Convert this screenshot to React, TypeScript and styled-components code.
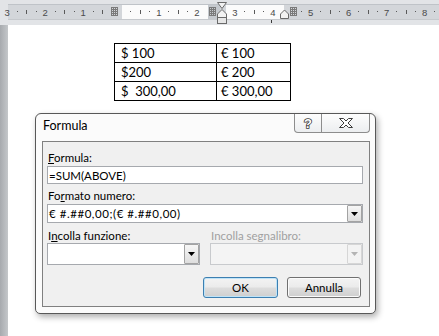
import React from "react";
import styled, { createGlobalStyle } from "styled-components";

const Global = createGlobalStyle`
  html, body { margin: 0; padding: 0; background: #ffffff; }
  body { width: 439px; height: 336px; overflow: hidden; }
`;

const UI_FONT = `"Lato", "Liberation Sans", sans-serif`;

const Screen = styled.div`
  position: relative;
  width: 439px;
  height: 336px;
  overflow: hidden;
  background: #ffffff;
  display: flex;
  flex-direction: column;
`;

/* ---------- Ruler ---------- */
const RulerBand = styled.div`
  position: relative;
  flex: none;
  height: 25px;
  box-sizing: border-box;
  padding: 4px 0 0 8px;
  background: #e2e4e7;
`;

const RulerStrip = styled.div`
  display: flex;
  height: 16px;
  box-sizing: border-box;
  border-top: 1px solid #bfc3c8;
  border-bottom: 1px solid #c6c9cd;
`;

const RulerSeg = styled.div<{ $w?: number; $tone: "gray" | "white" | "dark" }>`
  ${(p) => (p.$w ? `width: ${p.$w}px; flex: none;` : "flex: 1;")}
  background: ${(p) =>
    p.$tone === "white" ? "#fbfbfb" : p.$tone === "dark" ? "#c5c9ce" : "#d3d6da"};
`;

const RulerOverlay = styled.svg`
  position: absolute;
  left: 0;
  top: 0;
  width: 439px;
  height: 25px;
  pointer-events: none;
`;

/* ---------- Document ---------- */
const DocArea = styled.div`
  flex: 1;
  display: flex;
`;

const SideStrip = styled.div`
  width: 8px;
  flex: none;
  background: linear-gradient(to right, #a7aaae, #c4c7ca);
`;

const Page = styled.div`
  flex: 1;
  background: #ffffff;
  padding: 18px 0 0 106px;
`;

const CellGrid = styled.div`
  display: grid;
  grid-template-columns: 102px 74px;
  width: max-content;
  border-left: 1px solid #000;
  border-top: 1px solid #000;
`;

const Cell = styled.div<{ $pad: number }>`
  height: 19px;
  box-sizing: border-box;
  border-right: 1px solid #000;
  border-bottom: 1px solid #000;
  padding-left: ${(p) => p.$pad}px;
  font: 13px "Lato", "Liberation Sans", sans-serif;
  line-height: 18px;
  color: #000;
  white-space: pre;
`;

/* ---------- Dialog ---------- */
const Dialog = styled.div`
  position: absolute;
  left: 35px;
  top: 113px;
  width: 341px;
  height: 201px;
  box-sizing: border-box;
  border: 1px solid #585858;
  border-radius: 6px 6px 5px 5px;
  background: #fbfbfb;
  box-shadow: 2px 3px 6px rgba(0, 0, 0, 0.32);
  display: flex;
  flex-direction: column;
  padding: 0 5px 6px 6px;
  font-family: ${UI_FONT};
`;

const TitleBar = styled.div`
  height: 27px;
  flex: none;
  display: flex;
  align-items: flex-start;
`;

const TitleText = styled.div`
  margin-left: 1px;
  padding-top: 4px;
  font-size: 12.5px;
  line-height: 15px;
  color: #000;
`;

const CaptionGroup = styled.div`
  margin-left: auto;
  display: flex;
`;

const CaptionButton = styled.div<{ $w: number; $side: "left" | "right" }>`
  width: ${(p) => p.$w}px;
  height: 19px;
  box-sizing: border-box;
  border: 1px solid #8d8d8d;
  border-top: none;
  ${(p) => (p.$side === "right" ? "border-left: none;" : "")}
  border-radius: ${(p) => (p.$side === "left" ? "0 0 0 4px" : "0 0 4px 0")};
  background: linear-gradient(#fdfdfd, #eceef0);
  display: flex;
  align-items: center;
  justify-content: center;
`;

const Client = styled.div`
  flex: 1;
  border: 1px solid #808080;
  background: #f0f0f0;
  display: flex;
  flex-direction: column;
  padding: 9px 6px 8px 4px;
`;

const Label = styled.div<{ $top?: number; $disabled?: boolean }>`
  margin-top: ${(p) => p.$top ?? 0}px;
  padding-left: 1px;
  font-size: 11.5px;
  line-height: 14px;
  height: 14px;
  color: ${(p) => (p.$disabled ? "#a0a0a0" : "#000")};
  white-space: pre;
`;

const Key = styled.span`
  text-decoration: underline;
  text-underline-offset: 1px;
`;

const TextBox = styled.div<{ $h: number; $top?: number; $disabled?: boolean }>`
  margin-top: ${(p) => p.$top ?? 0}px;
  height: ${(p) => p.$h}px;
  box-sizing: border-box;
  border: 1px solid ${(p) => (p.$disabled ? "#c8cacd" : "#a6a9ae")};
  background: ${(p) => (p.$disabled ? "#f4f4f4" : "#ffffff")};
  display: flex;
  align-items: stretch;
  font-size: 11.5px;
  color: #000;
`;

const BoxText = styled.div<{ $spacing?: number }>`
  flex: 1;
  padding-left: 1px;
  display: flex;
  align-items: center;
  white-space: pre;
  letter-spacing: ${(p) => p.$spacing ?? 0}px;
`;

const DropButton = styled.div<{ $disabled?: boolean }>`
  width: 15px;
  flex: none;
  box-sizing: border-box;
  border: 1px solid ${(p) => (p.$disabled ? "#d6d6d6" : "#a3a3a3")};
  border-radius: 1px;
  background: ${(p) =>
    p.$disabled ? "#f3f3f3" : "linear-gradient(#f6f6f6, #dedede)"};
  display: flex;
  align-items: center;
  justify-content: center;
`;

const ComboRow = styled.div`
  margin-top: 6px;
  display: grid;
  grid-template-columns: 1fr 1fr;
  column-gap: 10px;
`;

const ComboCol = styled.div`
  display: flex;
  flex-direction: column;
`;

const ButtonRow = styled.div`
  margin-top: 12px;
  display: flex;
  justify-content: flex-end;
  gap: 9px;
  padding-right: 2px;
`;

const PushButton = styled.div<{ $w: number; $default?: boolean }>`
  width: ${(p) => p.$w}px;
  height: 21px;
  box-sizing: border-box;
  border: 1px solid ${(p) => (p.$default ? "#3c7fb1" : "#707070")};
  border-radius: 3px;
  background: linear-gradient(#f3f3f3 0%, #ebebeb 48%, #dddddd 52%, #cfcfcf 100%);
  box-shadow: inset 0 0 0 1px ${(p) => (p.$default ? "#bfe3f7" : "#fbfbfb")};
  display: flex;
  align-items: center;
  justify-content: center;
  font-size: 11.5px;
  color: #000;
`;

/* ---------- Icons ---------- */
const Arrow = ({ disabled }: { disabled?: boolean }) => (
  <svg width="7" height="4" viewBox="0 0 7 4">
    <path d="M0 0h7L3.5 4z" fill={disabled ? "#b4b4b4" : "#000"} />
  </svg>
);

const HelpGlyph = () => (
  <svg width="12" height="14" viewBox="0 0 12 14">
    <text
      x="6"
      y="12"
      textAnchor="middle"
      fontFamily="'Liberation Sans', sans-serif"
      fontWeight="bold"
      fontSize="13"
      fill="#ffffff"
      stroke="#3a3a3a"
      strokeWidth="1.6"
      paintOrder="stroke"
    >
      ?
    </text>
  </svg>
);

const CloseGlyph = () => (
  <svg width="14" height="10" viewBox="0 0 14 10">
    <path
      d="M0.5 0.5H4.5L7 3L9.5 0.5H13.5L9 5L13.5 9.5H9.5L7 7L4.5 9.5H0.5L5 5Z"
      fill="#ffffff"
      stroke="#3d3d3d"
      strokeWidth="1"
      strokeLinejoin="round"
    />
  </svg>
);

/* ---------- Ruler drawing ---------- */
const ZERO = 121;
const CM = 37.95;
const hidden: Array<[number, number]> = [
  [109, 121],
  [204, 230],
  [279, 299],
];
const isHidden = (x: number) => hidden.some(([a, b]) => x >= a && x <= b);

function rulerMarks() {
  const out: React.ReactNode[] = [];
  for (let n = -3; n <= 8; n++) {
    const base = ZERO + n * CM;
    if (n !== 0 && !isHidden(base) && base > 3) {
      out.push(
        <text
          key={`n${n}`}
          x={base}
          y={16}
          textAnchor="middle"
          fontSize="9.5"
          fontFamily="'Liberation Sans', sans-serif"
          fill="#4a4a4a"
        >
          {Math.abs(n)}
        </text>
      );
    }
    for (let q = 1; q <= 3; q++) {
      const x = Math.round(base + (q * CM) / 4);
      if (x < 10 || x > 437 || isHidden(x)) continue;
      if (q === 2) {
        out.push(<rect key={`t${n}${q}`} x={x} y={10} width={1} height={4} fill="#5a5a5a" />);
      } else {
        out.push(<rect key={`t${n}${q}`} x={x} y={11} width={1} height={1} fill="#5a5a5a" />);
      }
    }
  }
  return out;
}

const GridMark = ({ x }: { x: number }) => {
  const lines: React.ReactNode[] = [];
  for (let i = 0; i < 4; i++)
    lines.push(<rect key={`v${i}`} x={x + i * 2} y={7} width={1} height={9} fill="#7a7a7a" />);
  for (let j = 0; j < 5; j++)
    lines.push(<rect key={`h${j}`} x={x} y={7 + j * 2} width={7} height={1} fill="#7a7a7a" />);
  return <g>{lines}</g>;
};

const RulerDrawing = () => (
  <RulerOverlay viewBox="0 0 439 25">
    {rulerMarks()}
    <GridMark x={111} />
    <GridMark x={209} />
    <GridMark x={290} />
    {/* left indent hourglass */}
    <path d="M217.5 2.5H226.5L222 8.5Z" fill="#f2f2f2" stroke="#6a6a6a" />
    <path d="M222 9.5L226.5 14V17.5H217.5V14Z" fill="#f2f2f2" stroke="#6a6a6a" />
    <rect x={217.5} y={17.5} width={9} height={6} fill="#e6e6e6" stroke="#6a6a6a" />
    {/* right indent */}
    <path d="M284.5 10L288.5 14V18.5H280.5V14Z" fill="#f2f2f2" stroke="#6a6a6a" />
    {/* tab stop tick */}
    <rect x={271} y={20} width={1} height={3} fill="#3a3a3a" />
  </RulerOverlay>
);

const rows: Array<[string, string]> = [
  ["$ 100", "€ 100"],
  ["$200", "€ 200"],
  ["$  300,00", "€ 300,00"],
];

export default function App() {
  return (
    <>
      <Global />
      <Screen>
        <RulerBand>
          <RulerStrip>
            <RulerSeg $tone="gray" $w={114} />
            <RulerSeg $tone="white" $w={86} />
            <RulerSeg $tone="dark" $w={12} />
            <RulerSeg $tone="gray" $w={6} />
            <RulerSeg $tone="white" $w={58} />
            <RulerSeg $tone="gray" />
          </RulerStrip>
          <RulerDrawing />
        </RulerBand>

        <DocArea>
          <SideStrip />
          <Page>
            <CellGrid>
              {rows.map(([a, b], i) => (
                <React.Fragment key={i}>
                  <Cell $pad={6}>{a}</Cell>
                  <Cell $pad={4}>{b}</Cell>
                </React.Fragment>
              ))}
            </CellGrid>
          </Page>
        </DocArea>

        <Dialog>
          <TitleBar>
            <TitleText>Formula</TitleText>
            <CaptionGroup>
              <CaptionButton $w={28} $side="left">
                <HelpGlyph />
              </CaptionButton>
              <CaptionButton $w={48} $side="right">
                <CloseGlyph />
              </CaptionButton>
            </CaptionGroup>
          </TitleBar>
          <Client>
            <Label>
              <Key>F</Key>ormula:
            </Label>
            <TextBox $h={18} $top={1}>
              <BoxText>=SUM(ABOVE)</BoxText>
            </TextBox>

            <Label $top={5}>
              Fo<Key>r</Key>mato numero:
            </Label>
            <TextBox $h={19} $top={1}>
              <BoxText $spacing={0.55}>€ #.##0,00;(€ #.##0,00)</BoxText>
              <DropButton>
                <Arrow />
              </DropButton>
            </TextBox>

            <ComboRow>
              <ComboCol>
                <Label>
                  I<Key>n</Key>colla funzione:
                </Label>
                <TextBox $h={22}>
                  <BoxText />
                  <DropButton>
                    <Arrow />
                  </DropButton>
                </TextBox>
              </ComboCol>
              <ComboCol>
                <Label $disabled>Incolla segnalibro:</Label>
                <TextBox $h={22} $disabled>
                  <BoxText />
                  <DropButton $disabled>
                    <Arrow disabled />
                  </DropButton>
                </TextBox>
              </ComboCol>
            </ComboRow>

            <ButtonRow>
              <PushButton $w={75} $default>
                OK
              </PushButton>
              <PushButton $w={74}>Annulla</PushButton>
            </ButtonRow>
          </Client>
        </Dialog>
      </Screen>
    </>
  );
}
